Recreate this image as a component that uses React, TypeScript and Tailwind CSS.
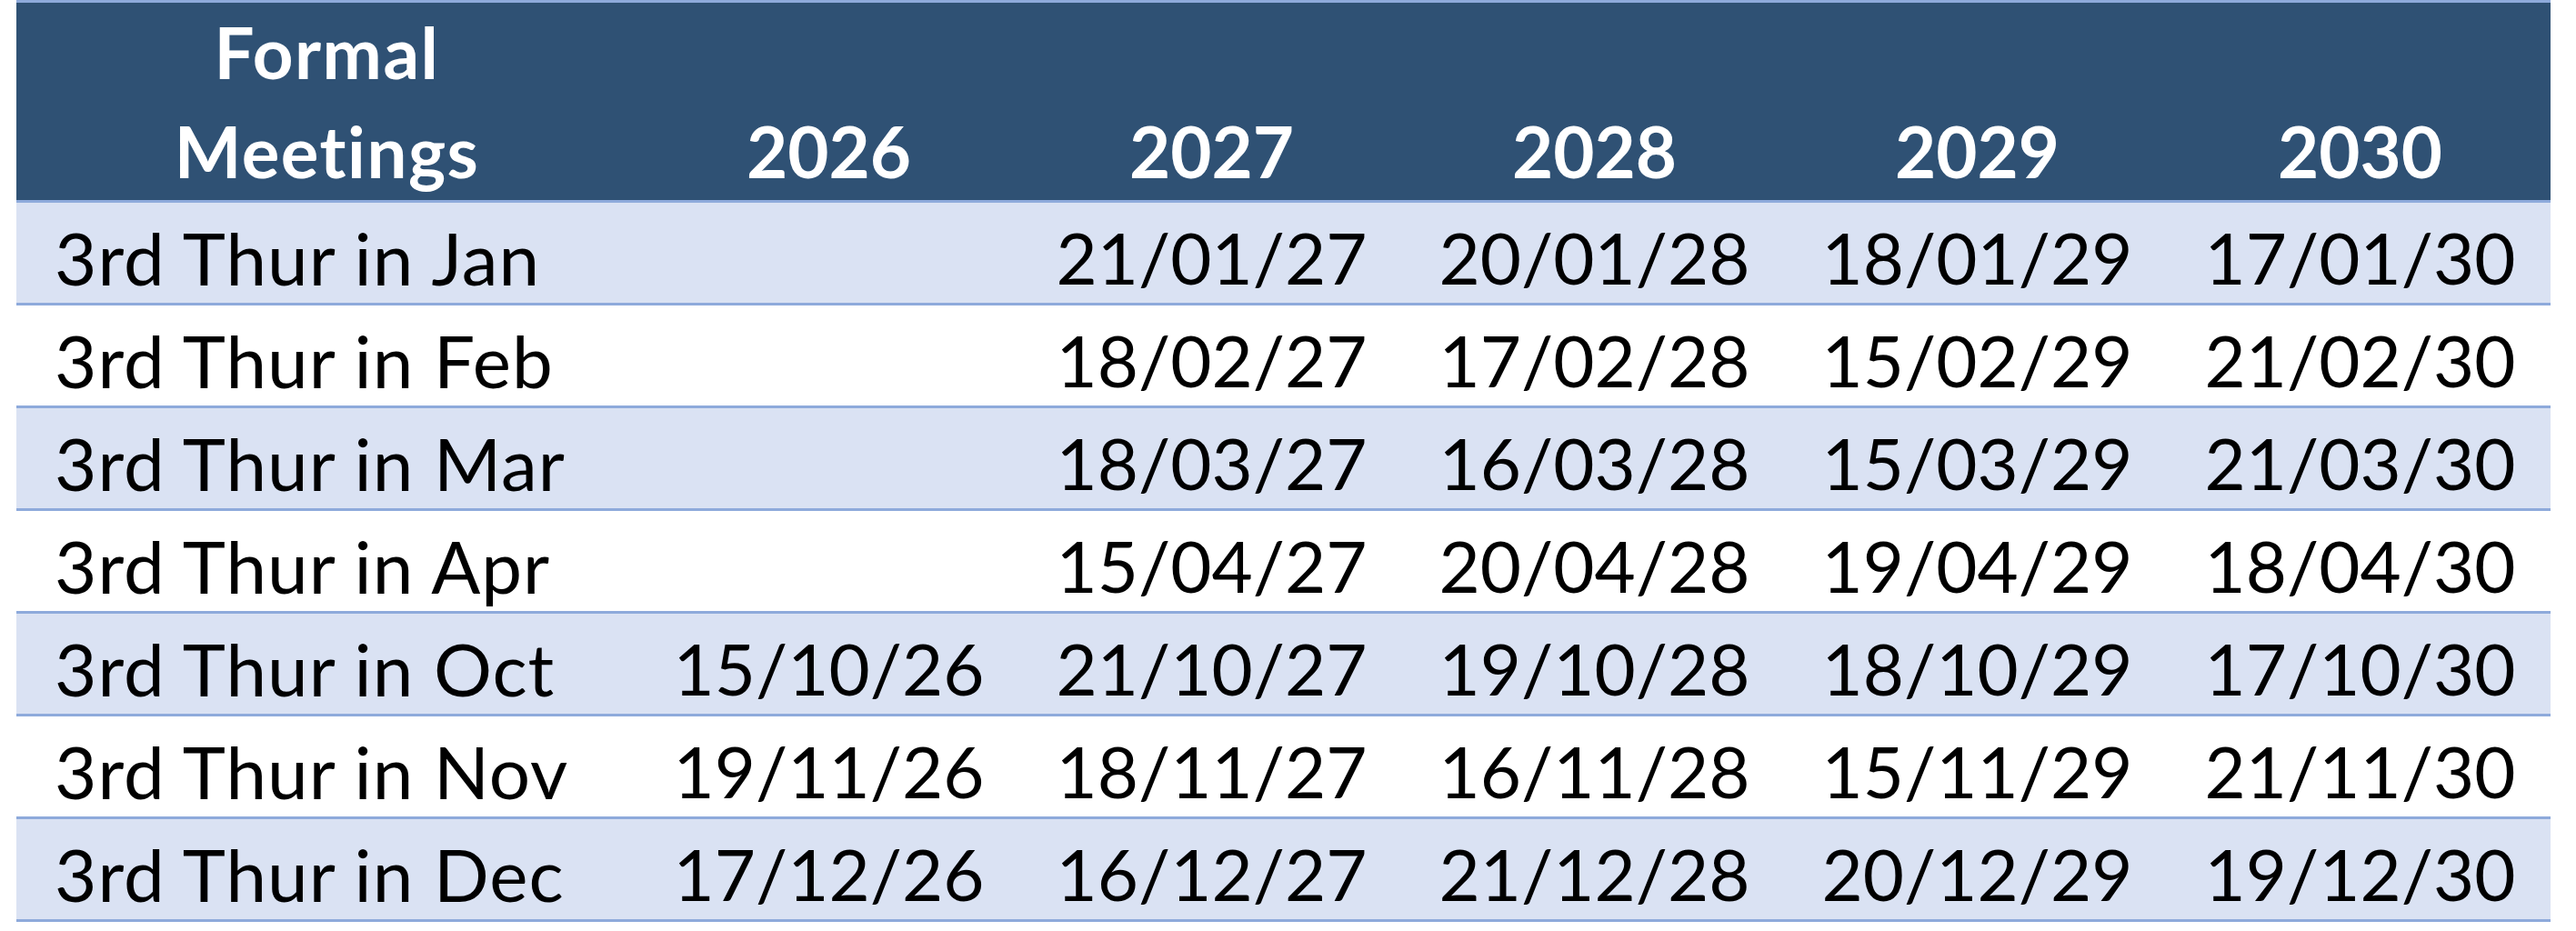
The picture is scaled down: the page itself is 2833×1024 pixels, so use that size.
const years = ['2026', '2027', '2028', '2029', '2030']

const rows: Array<{ label: string; dates: string[] }> = [
  { label: '3rd Thur in Jan', dates: ['', '21/01/27', '20/01/28', '18/01/29', '17/01/30'] },
  { label: '3rd Thur in Feb', dates: ['', '18/02/27', '17/02/28', '15/02/29', '21/02/30'] },
  { label: '3rd Thur in Mar', dates: ['', '18/03/27', '16/03/28', '15/03/29', '21/03/30'] },
  { label: '3rd Thur in Apr', dates: ['', '15/04/27', '20/04/28', '19/04/29', '18/04/30'] },
  { label: '3rd Thur in Oct', dates: ['15/10/26', '21/10/27', '19/10/28', '18/10/29', '17/10/30'] },
  { label: '3rd Thur in Nov', dates: ['19/11/26', '18/11/27', '16/11/28', '15/11/29', '21/11/30'] },
  { label: '3rd Thur in Dec', dates: ['17/12/26', '16/12/27', '21/12/28', '20/12/29', '19/12/30'] },
]

export default function App() {
  return (
    <div className="min-h-[1024px] w-[2833px] bg-white" style={{ fontFamily: 'Lato, "Open Sans", sans-serif' }}>
      <div className="ml-[18px] w-[2787px] border-t-[3px] border-[#8eaadb]">
        {/* header */}
        <div className="grid h-[220px] grid-cols-[683px_repeat(5,421px)] border-b-[3px] border-[#8eaadb] bg-[#2f5174] text-[78px] font-bold leading-[109px] text-white">
          <div className="flex items-end justify-center text-center tracking-[1.5px]">
            Formal
            <br />
            Meetings
          </div>
          {years.map((y) => (
            <div key={y} className="flex items-end justify-center">
              {y}
            </div>
          ))}
        </div>
        {/* body */}
        {rows.map((r, i) => (
          <div
            key={r.label}
            className={
              'grid h-[113px] grid-cols-[683px_repeat(5,421px)] border-b-[3px] border-[#8eaadb] text-black ' +
              (i % 2 === 0 ? 'bg-[#dae2f3]' : 'bg-white')
            }
          >
            <div className="flex items-center pl-[42px] text-[80px] tracking-[1px]">{r.label}</div>
            {r.dates.map((d, j) => (
              <div key={j} className="flex items-center justify-center text-[78px]">
                {d}
              </div>
            ))}
          </div>
        ))}
      </div>
    </div>
  )
}
